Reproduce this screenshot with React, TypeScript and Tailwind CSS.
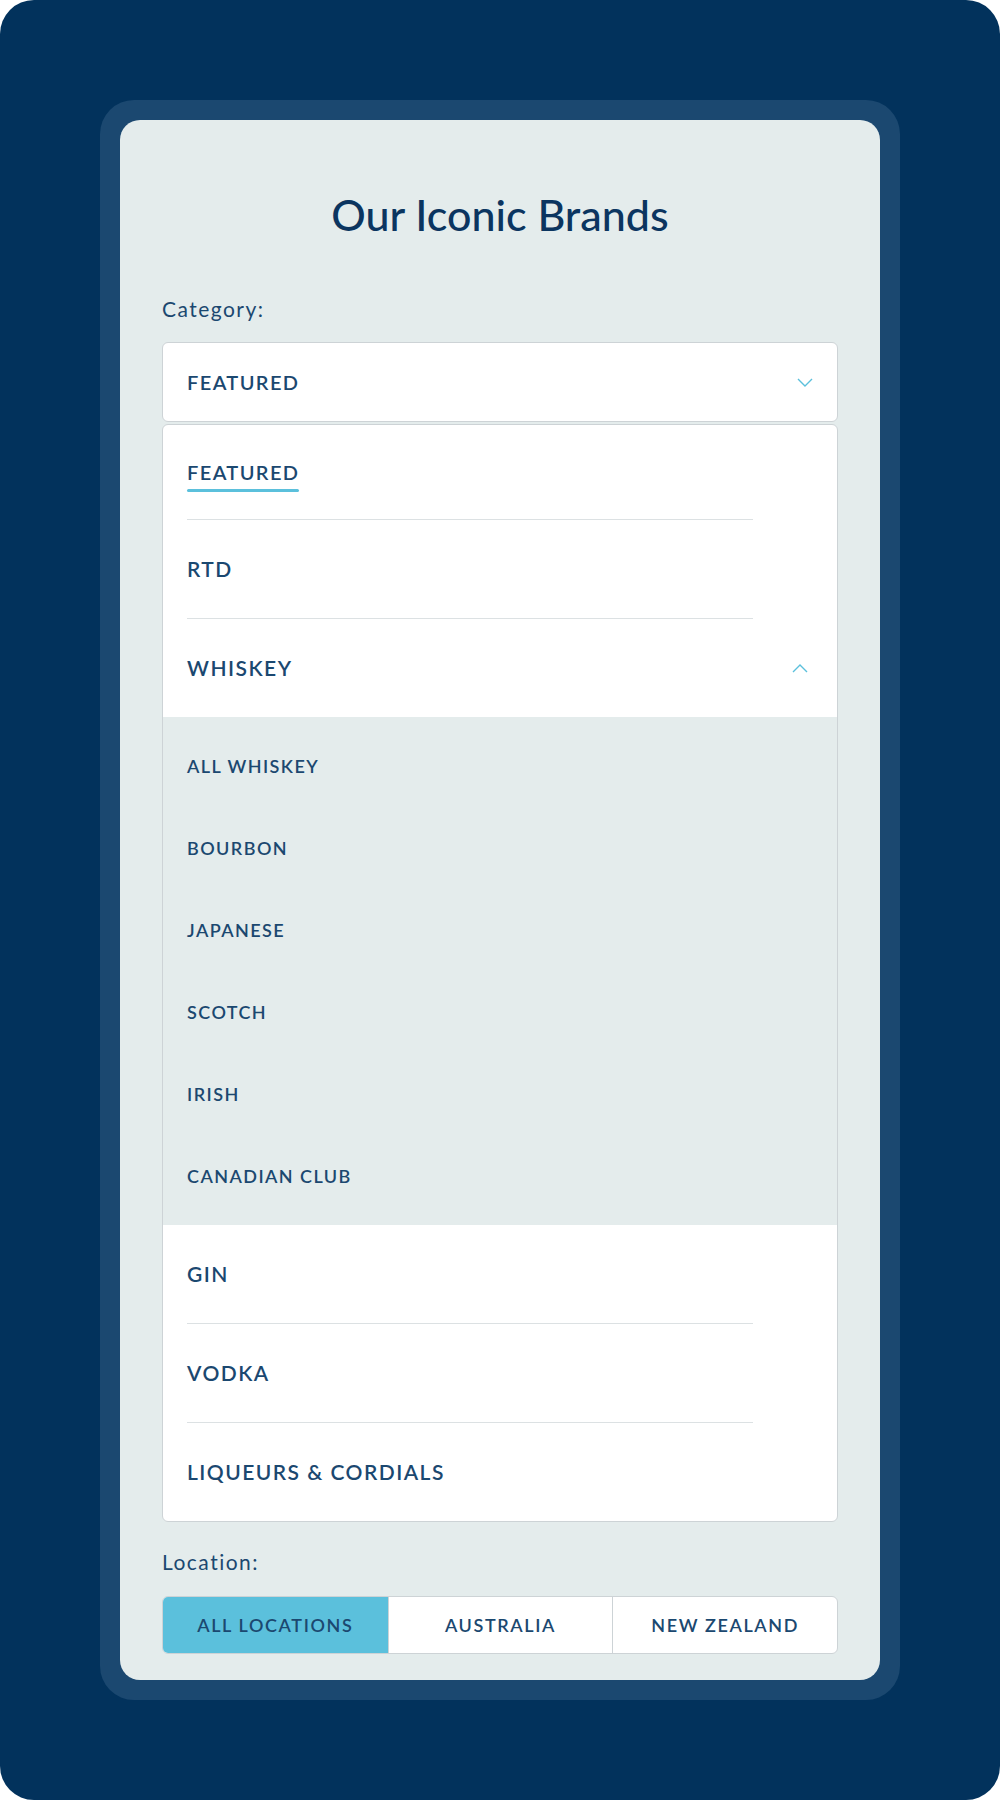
import React from 'react';

const font = { fontFamily: 'Lato, "Noto Sans", sans-serif' };

function Chevron({ up = false }: { up?: boolean }) {
    return (
        <svg width="16" height="9" viewBox="0 0 16 9" fill="none" className={up ? 'rotate-180' : ''}>
            <polyline points="1,1 8,8 15,1" stroke="#5BC0DC" strokeWidth="1.4" />
        </svg>
    );
}

const subItems = ['ALL WHISKEY', 'BOURBON', 'JAPANESE', 'SCOTCH', 'IRISH', 'CANADIAN CLUB'];

function Divider() {
    return <div className="ml-6 mr-[84px] h-px bg-[#DCE1E3]"></div>;
}

function Row({ label, chevron }: { label: string, chevron?: boolean }) {
    return (
        <div className="flex h-[98px] items-center justify-between pl-6 pr-[29px]">
            <span className="text-[21px] font-semibold tracking-[0.07em] text-[#1B4870]">{label}</span>
            {chevron && <Chevron up />}
        </div>
    );
}

export default function App() {
    return (
        <div className="bg-white" style={font}>
            <div className="h-[1800px] rounded-[34px] bg-[#02325C] p-[100px]">
                <div className="h-full rounded-[34px] bg-[#1B4870] p-5">
                    <div className="h-full rounded-[20px] bg-[#E4ECEC] px-[42px] pt-[75px]">
                        <h1 className="text-center text-[43px] leading-[40px] font-medium text-[#0B3560]">Our Iconic Brands</h1>

                        <p className="mt-[62px] text-[21px] leading-6 text-[#1B4870] tracking-[0.07em]">Category:</p>

                        <div className="mt-[21px] flex h-20 items-center justify-between rounded-md border border-[#CDD3D6] bg-white pl-6 pr-[24px]">
                            <span className="text-[20px] font-semibold tracking-[0.07em] text-[#1B4870]">FEATURED</span>
                            <Chevron />
                        </div>

                        <div className="mt-[2px] overflow-hidden rounded-md border border-[#CDD3D6] bg-white">
                            <div className="h-[94px] pl-6 pt-[35px]">
                                <div className="inline-flex flex-col">
                                    <span className="text-[20px] leading-6 font-semibold tracking-[0.07em] text-[#1B4870]">FEATURED</span>
                                    <span className="mt-[5px] h-[3px] rounded-full bg-[#5BC0DC]"></span>
                                </div>
                            </div>
                            <Divider />
                            <Row label="RTD" />
                            <Divider />
                            <Row label="WHISKEY" chevron />
                            <div className="bg-[#E4ECEC] py-2">
                                {subItems.map((s) => (
                                    <div key={s} className="flex h-[82px] items-center pl-6 text-[18px] font-semibold tracking-[0.08em] text-[#1B4870]">{s}</div>
                                ))}
                            </div>
                            <Row label="GIN" />
                            <Divider />
                            <Row label="VODKA" />
                            <Divider />
                            <Row label="LIQUEURS & CORDIALS" />
                        </div>

                        <p className="mt-[28px] text-[21px] leading-6 text-[#1B4870] tracking-[0.07em]">Location:</p>

                        <div className="mt-[22px] grid h-[58px] grid-cols-3 overflow-hidden rounded-md border border-[#CDD3D6] bg-white">
                            <div className="flex items-center justify-center bg-[#5BC0DC] text-[18px] font-semibold tracking-[0.09em] text-[#1B4870]">ALL LOCATIONS</div>
                            <div className="flex items-center justify-center border-l border-[#CDD3D6] text-[18px] font-semibold tracking-[0.09em] text-[#1B4870]">AUSTRALIA</div>
                            <div className="flex items-center justify-center border-l border-[#CDD3D6] text-[18px] font-semibold tracking-[0.09em] text-[#1B4870]">NEW ZEALAND</div>
                        </div>
                    </div>
                </div>
            </div>
        </div>
    );
}
